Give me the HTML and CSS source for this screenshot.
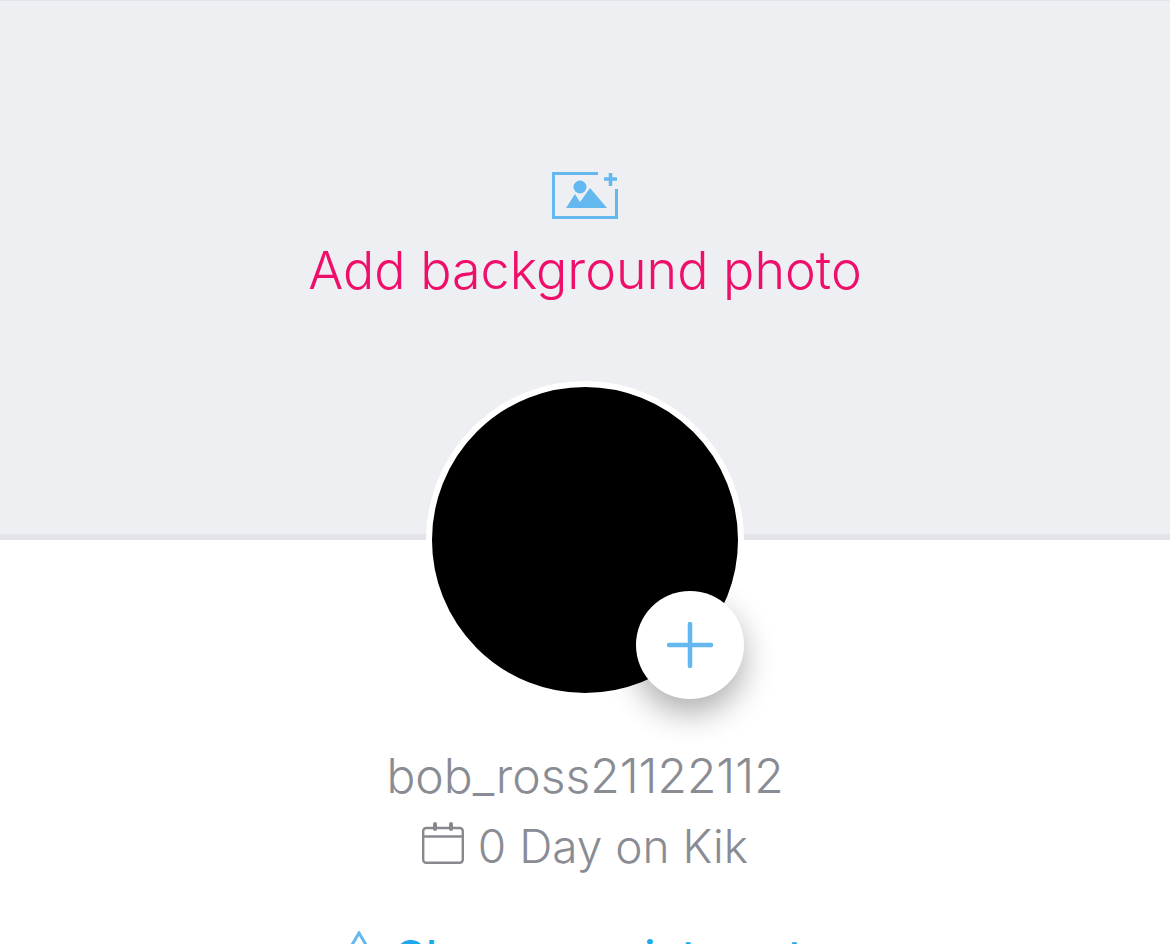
FILE: index.html
```html
<!DOCTYPE html>
<html lang="en">
<head>
    <meta charset="UTF-8">
    <title>Profile</title>
    <link rel="stylesheet" href="styles.css">
</head>
<body>
    <section class="cover">
        <svg class="cover-icon" width="68" height="50" viewBox="0 0 68 50">
            <path d="M47 2.500H2.500V46.500H65.500V18" fill="none" stroke="#63b9ef" stroke-width="3"/>
            <path d="M53 8h13M59.500 2v13" fill="none" stroke="#63b9ef" stroke-width="3.500"/>
            <circle cx="29" cy="16" r="6.500" fill="#63b9ef"/>
            <path d="M15 37L24 23L29 31L39 17L56 37Z" fill="#63b9ef"/>
        </svg>
        <div class="cover-label">Add background photo</div>
    </section>

    <section class="profile">
        <div class="avatar">
            <button class="avatar-add">
                <svg width="46" height="46" viewBox="0 0 46 46">
                    <path d="M2 23h42M23 2v42" fill="none" stroke="#63b9ef" stroke-width="4.500" stroke-linecap="round"/>
                </svg>
            </button>
        </div>
        <div class="username">bob_ross21122112</div>
        <div class="joined">
            <svg class="joined-icon" width="42" height="42" viewBox="0 0 42 42">
                <rect x="1.200" y="6" width="39.600" height="34.800" rx="3" fill="none" stroke="#88898f" stroke-width="2.400"/>
                <path d="M1 14.500h40" stroke="#88898f" stroke-width="2.400"/>
                <path d="M13 2v5M29 2v5" stroke="#88898f" stroke-width="4" stroke-linecap="round"/>
            </svg>
            <span>0 Day on Kik</span>
        </div>
        <div class="interests">
            <svg class="interests-icon" width="30" height="40" viewBox="0 0 30 40">
                <path d="M15 2L2 24H28Z" fill="none" stroke="#63b9ef" stroke-width="3"/>
            </svg>
            <span>Change my interests</span>
        </div>
    </section>
</body>
</html>
```

FILE: styles.css
```css
html, body {
    margin: 0;
    padding: 0;
    height: 100%;
    overflow: hidden;
}
body {
    font-family: Inter, "Liberation Sans", sans-serif;
    background-color: #fff;
}
.cover {
    box-sizing: border-box;
    height: 540px;
    padding-top: 170px;
    background-color: #eeeff3;
    border-top: 1px solid #e3e4e9;
    border-bottom: 6px solid #e3e4e9;
    display: flex;
    flex-direction: column;
    align-items: center;
}
.cover-icon {
    display: block;
}
.cover-label {
    margin-top: 18px;
    font-size: 52px;
    line-height: 64px;
    font-weight: 300;
    color: #ee0f6b;
}
.profile {
    display: flex;
    flex-direction: column;
    align-items: center;
}
.avatar {
    position: relative;
    box-sizing: border-box;
    width: 318px;
    height: 318px;
    margin-top: -159px;
    border: 6px solid #fff;
    border-radius: 50%;
    background-color: #000;
}
.avatar-add {
    position: absolute;
    left: 204px;
    top: 204px;
    width: 108px;
    height: 108px;
    padding: 0;
    border: 0;
    border-radius: 50%;
    background-color: #fff;
    box-shadow: 0 14px 32px rgba(0, 0, 0, 0.32);
    display: flex;
    align-items: center;
    justify-content: center;
}
.username {
    margin-top: 47px;
    font-size: 48px;
    line-height: 60px;
    font-weight: 300;
    color: #8a8c94;
}
.joined {
    margin-top: 10px;
    display: flex;
    align-items: center;
    gap: 14px;
    font-size: 46px;
    line-height: 60px;
    font-weight: 300;
    color: #8a8c94;
}
.joined-icon {
    margin-bottom: 6px;
}
.interests {
    margin-top: 50px;
    display: flex;
    align-items: flex-start;
    gap: 20px;
    font-size: 44px;
    line-height: 60px;
    font-weight: 500;
    color: #1fa9ec;
}
.interests-icon {
    margin-top: 5px;
}
```
